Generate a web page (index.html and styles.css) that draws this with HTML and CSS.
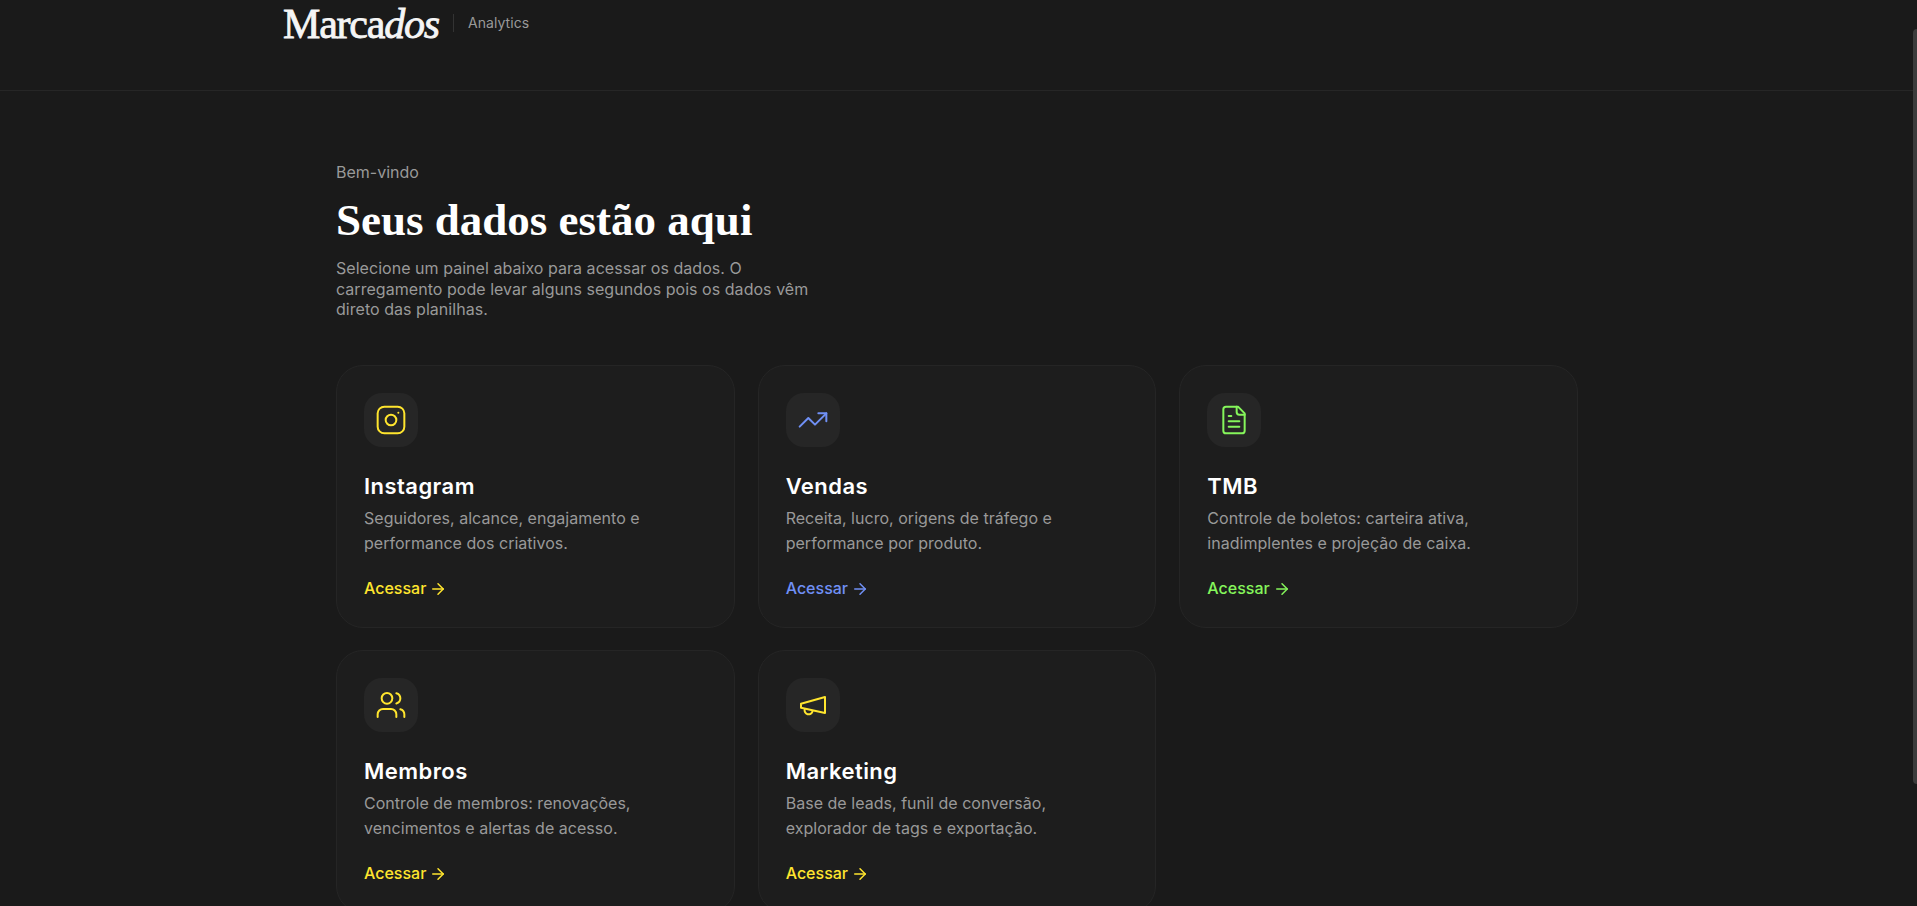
FILE: index.html
```html
<!DOCTYPE html>
<html lang="pt-BR">
<head>
    <meta charset="UTF-8">
    <meta name="viewport" content="width=device-width, initial-scale=1.0">
    <title>Marcados Analytics</title>
    <link rel="stylesheet" href="styles.css">
</head>
<body>
    <header class="header">
        <div class="header-content">
            <a href="#" class="logo">Marca<em>dos</em></a>
            <span class="divider"></span>
            <span class="product">Analytics</span>
        </div>
    </header>

    <main class="content">
        <section class="intro">
            <p class="welcome">Bem-vindo</p>
            <h1>Seus dados estão aqui</h1>
            <p class="intro-text">Selecione um painel abaixo para acessar os dados. O carregamento pode levar alguns segundos pois os dados vêm direto das planilhas.</p>
        </section>

        <section class="cards">
            <a href="#" class="card yellow">
                <span class="card-icon">
                    <svg viewBox="0 0 24 24"><rect x="2" y="2" width="20" height="20" rx="5"/><circle cx="12" cy="12" r="4"/><path d="M17.5 6.5h.01"/></svg>
                </span>
                <h2>Instagram</h2>
                <p>Seguidores, alcance, engajamento e performance dos criativos.</p>
                <span class="card-link">Acessar <svg viewBox="0 0 24 24"><path d="M5 12h14"/><path d="m12 5 7 7-7 7"/></svg></span>
            </a>

            <a href="#" class="card blue">
                <span class="card-icon">
                    <svg viewBox="0 0 24 24"><path d="m22 7-8.5 8.5-5-5L2 17"/><path d="M16 7h6v6"/></svg>
                </span>
                <h2>Vendas</h2>
                <p>Receita, lucro, origens de tráfego e performance por produto.</p>
                <span class="card-link">Acessar <svg viewBox="0 0 24 24"><path d="M5 12h14"/><path d="m12 5 7 7-7 7"/></svg></span>
            </a>

            <a href="#" class="card green">
                <span class="card-icon">
                    <svg viewBox="0 0 24 24"><path d="M15 2H6a2 2 0 0 0-2 2v16a2 2 0 0 0 2 2h12a2 2 0 0 0 2-2V7Z"/><path d="M14 2v4a2 2 0 0 0 2 2h4"/><path d="M10 9H8"/><path d="M16 13H8"/><path d="M16 17H8"/></svg>
                </span>
                <h2>TMB</h2>
                <p>Controle de boletos: carteira ativa, inadimplentes e projeção de caixa.</p>
                <span class="card-link">Acessar <svg viewBox="0 0 24 24"><path d="M5 12h14"/><path d="m12 5 7 7-7 7"/></svg></span>
            </a>

            <a href="#" class="card yellow">
                <span class="card-icon">
                    <svg viewBox="0 0 24 24"><path d="M16 21v-2a4 4 0 0 0-4-4H6a4 4 0 0 0-4 4v2"/><circle cx="9" cy="7" r="4"/><path d="M22 21v-2a4 4 0 0 0-3-3.87"/><path d="M16 3.13a4 4 0 0 1 0 7.75"/></svg>
                </span>
                <h2>Membros</h2>
                <p>Controle de membros: renovações, vencimentos e alertas de acesso.</p>
                <span class="card-link">Acessar <svg viewBox="0 0 24 24"><path d="M5 12h14"/><path d="m12 5 7 7-7 7"/></svg></span>
            </a>

            <a href="#" class="card yellow">
                <span class="card-icon">
                    <svg viewBox="0 0 24 24"><path d="m3 11 18-5v12L3 14v-3z"/><path d="M11.6 16.8a3 3 0 1 1-5.8-1.6"/></svg>
                </span>
                <h2>Marketing</h2>
                <p>Base de leads, funil de conversão, explorador de tags e exportação.</p>
                <span class="card-link">Acessar <svg viewBox="0 0 24 24"><path d="M5 12h14"/><path d="m12 5 7 7-7 7"/></svg></span>
            </a>
        </section>
    </main>

    <div class="scroll-thumb"></div>
</body>
</html>
```
FILE: styles.css
```css
* {
    box-sizing: border-box;
    margin: 0;
    padding: 0;
}

body {
    height: 100vh;
    overflow: hidden;
    background: #1a1a1a;
    color: #fff;
    font-family: Inter, sans-serif;
}

a {
    color: inherit;
    text-decoration: none;
}

/* Cabeçalho */
.header {
    height: 91px;
    padding-right: 3px;
    border-bottom: 1px solid #262626;
}

.header-content {
    display: flex;
    align-items: center;
    width: 1348px;
    height: 46px;
    margin: 0 auto;
}

.logo {
    width: 157px;
    padding-top: 2px;
    font-family: "Liberation Serif", serif;
    font-size: 42px;
    line-height: 46px;
    letter-spacing: -1.2px;
    white-space: nowrap;
    color: #f5f5f5;
    -webkit-text-stroke: 0.8px #f5f5f5;
}

.divider {
    width: 1px;
    height: 18px;
    margin: 0 14px 0 13px;
    background: #333;
}

.product {
    margin-top: -1px;
    font-size: 14px;
    letter-spacing: 0.05px;
    color: #999;
}

/* Conteúdo */
.content {
    width: 1245px;
    margin: 0 auto;
    padding: 71px 3px 0 0;
}

.intro {
    height: 203px;
}

.welcome {
    font-size: 16px;
    line-height: 20px;
    color: #999;
}

h1 {
    margin: 13px 0;
    font-family: "Liberation Serif", serif;
    font-size: 45px;
    line-height: 50px;
    font-weight: bold;
}

.intro-text {
    width: 480px;
    font-size: 16px;
    line-height: 20.5px;
    letter-spacing: 0.04px;
    color: #999;
}

/* Cartões */
.cards {
    display: grid;
    grid-template-columns: repeat(3, 1fr);
    gap: 22px 23px;
}

.card {
    height: 263px;
    padding: 27px;
    background: #1d1d1d;
    border: 1px solid #252525;
    border-radius: 27px;
}

.card-icon {
    display: flex;
    align-items: center;
    justify-content: center;
    width: 54px;
    height: 54px;
    border-radius: 18px;
    background: #262626;
}

.card svg {
    fill: none;
    stroke: currentColor;
    stroke-linecap: round;
    stroke-linejoin: round;
}

.card-icon svg {
    width: 32px;
    height: 32px;
    stroke-width: 1.5;
}

.card h2 {
    margin-top: 24px;
    font-size: 22px;
    line-height: 30px;
    font-weight: 600;
    letter-spacing: 0.45px;
    color: #fff;
}

.card p {
    width: 300px;
    margin-top: 5px;
    font-size: 16px;
    line-height: 25px;
    letter-spacing: 0.03px;
    color: #999;
}

.card-link {
    display: flex;
    align-items: center;
    gap: 3px;
    margin-top: 22px;
    font-size: 16px;
    line-height: 20px;
    font-weight: 500;
}

.card-link svg {
    width: 18px;
    height: 18px;
    margin-top: 1px;
    stroke-width: 2;
}

.yellow {
    color: #ffe52e;
}

.blue {
    color: #7090f5;
}

.green {
    color: #85f55b;
}

/* Barra de rolagem */
.scroll-thumb {
    position: fixed;
    top: 29px;
    right: 0;
    width: 4px;
    height: 755px;
    border-radius: 4px 0 0 4px;
    background: #3c3c3c;
}
```
